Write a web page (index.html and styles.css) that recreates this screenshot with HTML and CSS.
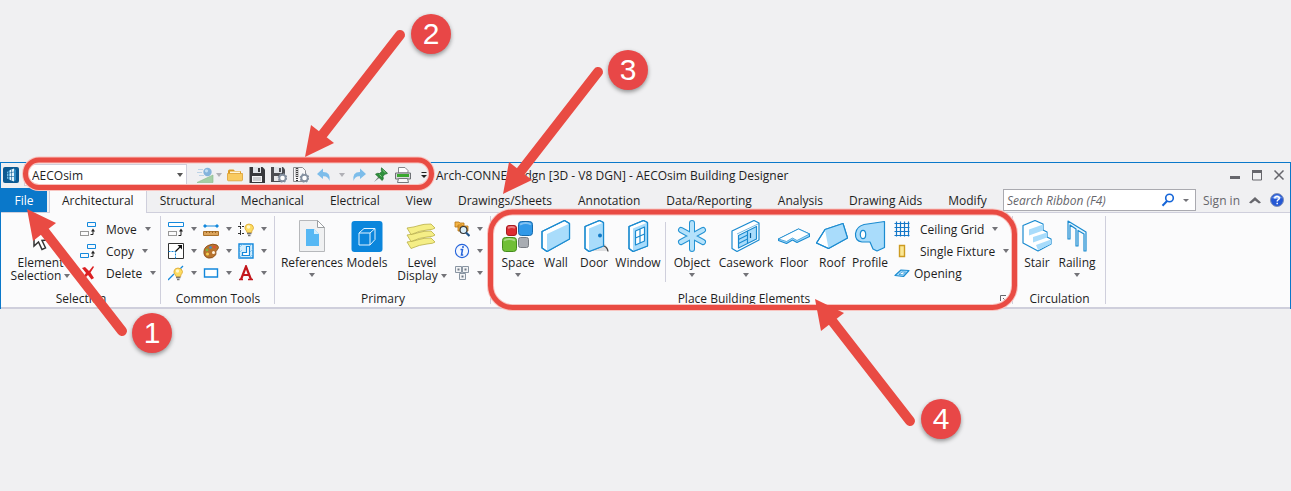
FILE: index.html
```html
<!DOCTYPE html>
<html lang="en">
<head>
  <meta charset="UTF-8" />
  <meta name="viewport" content="width=device-width, initial-scale=1" />
  <title>AECOsim Building Designer - Ribbon</title>
  <link rel="stylesheet" href="styles.css">
</head>
<body>
  <main class="app-window">
    <!-- title bar -->
    <header class="titlebar">
      <svg class="app-icon" viewBox="0 0 16 16"><rect width="16" height="16" rx="2" fill="#0c5a92"/><path d="M4 5l3-2v10l-3-1.500z" fill="#6fbce6"/><path d="M7 3l4-1.500v13L7 13z" fill="#e4f5fd"/><path d="M11 1.500l2 1.500v10l-2 1.500z" fill="#2f8cc4"/><path d="M5.500 4v9M8.500 2.500v11M4 6.500l7-1.500M4 9.500h7" stroke="#0c5a92" stroke-width=".6"/></svg>
      <div class="workflow">
        <select aria-label="Workflow"><option>AECOsim</option></select>
      </div>
      <div class="quick-access">
        <button class="qa-btn qa-wide" aria-label="View"><svg viewBox="0 0 18 16"><path d="M1 15.500L17 8v7.500z" fill="#a4cfa5" stroke="#8abb8c" stroke-width=".6"/><circle cx="11.500" cy="5" r="4.200" fill="#84b4dc"/><circle cx="10.500" cy="3.800" r="1.600" fill="#c3dff3"/><path d="M2 2.500h5M1 5.500h5M3 8.500h5" stroke="#bcd3e6" stroke-width="1.200"/></svg><i class="caret light"></i></button>
        <button class="qa-btn" aria-label="Open"><svg viewBox="0 0 16 16"><path d="M1 4q0-1.500 1.500-1.500h4l1.500 1.500h5q1 0 1 1v7H1z" fill="#dc9b24"/><path d="M3 4.500h10v4H3z" fill="#fff6d8"/><path d="M.5 6.500h15v6.500q-.1.800-1 .8H1.500q-.9 0-1-.8z" fill="#f9cb61" stroke="#dda032" stroke-width=".8"/></svg></button>
        <button class="qa-btn" aria-label="Save"><svg viewBox="0 0 16 16"><path d="M.5 0h13L16 2.500V16H.5z" fill="#38393d"/><path d="M4 0h8v6H4z" fill="#dfe3e8"/><path d="M9 1h2v4H9z" fill="#38393d"/><path d="M3 9h10v6H3z" fill="#f4f5f7"/><path d="M4 11h8M4 13h8" stroke="#a5a8ad"/></svg></button>
        <button class="qa-btn" aria-label="Save Settings"><svg viewBox="0 0 16 16"><path d="M0 0h12L14 2.500V15H0z" fill="#4b4d52"/><path d="M3 0h8v6H3z" fill="#dfe3e8"/><path d="M8 1h2v4H8z" fill="#4b4d52"/><path d="M3 9h8v5H3z" fill="#e6e8eb"/><circle cx="11.500" cy="11" r="3.200" fill="#fff" stroke="#8490a0" stroke-width="1.800"/><circle cx="11.500" cy="11" r="4.200" fill="none" stroke="#8490a0" stroke-width="1.200" stroke-dasharray="1.700 1.600"/></svg></button>
        <button class="qa-btn" aria-label="Compress"><svg viewBox="0 0 16 16"><path d="M.5.500h9l3 3v11H.5z" fill="#f7f7f8" stroke="#8b8d91"/><path d="M4 1v13" stroke="#333" stroke-width="2" stroke-dasharray="1 1"/><path d="M3 1v9M5 1v9" stroke="#666" stroke-width=".6"/><circle cx="11.500" cy="11" r="3.200" fill="#fff" stroke="#8490a0" stroke-width="1.800"/><circle cx="11.500" cy="11" r="4.200" fill="none" stroke="#8490a0" stroke-width="1.200" stroke-dasharray="1.700 1.600"/></svg></button>
        <button class="qa-btn qa-undo" aria-label="Undo"><svg viewBox="0 0 16 16"><path d="M7 1.500L1 7l6 5V9.300q5-.5 6.500 4.700 1.600-9-6.500-9.100z" fill="#7dbdea"/></svg><i class="caret light"></i></button>
        <button class="qa-btn" aria-label="Redo"><svg viewBox="0 0 16 16"><path d="M9 1.500L15 7l-6 5V9.300q-5-.5-6.500 4.700-1.600-9 6.500-9.100z" fill="#7dbdea"/></svg></button>
        <button class="qa-btn" aria-label="Pin"><svg viewBox="0 0 16 16"><path d="M1 15l5-6 1.200 1.200z" fill="#7a8580"/><path d="M8.500.800l6 5.500-1.500.7-1 .1-2 2.200q1 2.700-.8 4.200L2.500 7.300q1.800-1.500 4.200-.8l2-2-.4-1.200z" fill="#2f8f3c" stroke="#1b6a28" stroke-width=".7"/><path d="M9.500 3l3 2.800M6.500 7.500l2 2" stroke="#85cf86"/></svg></button>
        <button class="qa-btn" aria-label="Print"><svg viewBox="0 0 16 16"><path d="M3.500 6V.5h6.500l3 3V6z" fill="#fff" stroke="#85878b"/><path d="M.5 6h15v6H.5z" fill="#d8dadd" stroke="#6e7175"/><path d="M2 7h12v3H2z" fill="#3aa82f"/><path d="M3.500 11.500h9l1 4h-11z" fill="#f7f8f9" stroke="#75787c"/></svg></button>
        <button class="qa-btn" aria-label="Customize Quick Access"><svg viewBox="0 0 16 16"><path d="M4.500 5.500h5" stroke="#222"/><path d="M4 8h6l-3 3z" fill="#222"/></svg></button>
      </div>
      <h1 class="doc-title">Arch-CONNECT.dgn [3D - V8 DGN] - AECOsim Building Designer</h1>
      <div class="window-controls">
        <button aria-label="Minimize"><svg viewBox="0 0 12 12"><path d="M1 8.500h10" stroke="#66666c" stroke-width="3"/></svg></button>
        <button aria-label="Maximize"><svg viewBox="0 0 12 12"><path d="M1.500 2v9h9V2" fill="none" stroke="#66666c"/><path d="M1 2.500h10" stroke="#66666c" stroke-width="3"/></svg></button>
        <button aria-label="Close"><svg viewBox="0 0 12 12"><path d="M1.500 1.500l9 9M10.500 1.500l-9 9" stroke="#66666c" stroke-width="1.500"/></svg></button>
      </div>
    </header>

    <!-- tabs -->
    <nav class="tabbar">
      <button class="file-tab">File</button>
      <button class="tab active">Architectural</button>
      <button class="tab">Structural</button>
      <button class="tab">Mechanical</button>
      <button class="tab">Electrical</button>
      <button class="tab">View</button>
      <button class="tab">Drawings/Sheets</button>
      <button class="tab">Annotation</button>
      <button class="tab">Data/Reporting</button>
      <button class="tab">Analysis</button>
      <button class="tab">Drawing Aids</button>
      <button class="tab">Modify</button>
      <div class="tab-tools">
        <div class="search">
          <input type="search" placeholder="Search Ribbon (F4)" aria-label="Search Ribbon">
          <svg viewBox="0 0 14 14"><circle cx="8.500" cy="5" r="3.800" fill="none" stroke="#1565d8" stroke-width="1.600"/><path d="M6 8l-4.500 4.800" stroke="#1565d8" stroke-width="2"/></svg>
          <i class="caret small"></i>
        </div>
        <a class="sign-in" href="#">Sign in</a>
        <button class="tool-btn" aria-label="Collapse ribbon"><svg viewBox="0 0 14 14"><path d="M1 9.500l6-5.500 6 5.500-2 1L7 7.500l-4 3z" fill="#66666c"/></svg></button>
        <button class="tool-btn" aria-label="Help"><svg viewBox="0 0 14 14"><circle cx="7" cy="7" r="6.500" fill="#2558d4" stroke="#8091b8"/><path d="M2 5q5-6 10 0-5 2-10 0z" fill="#7ea4f2"/><path d="M4.700 5.400q.2-2 2.300-2 2.300 0 2.300 1.800 0 1.100-1.200 1.700-.9.500-.9 1.500M7.200 9.800v1.500" fill="none" stroke="#fff" stroke-width="1.500"/></svg></button>
      </div>
    </nav>

    <!-- ribbon groups -->
    <div class="ribbon">
      <section class="group g-selection">
        <div class="group-body">
          <button class="big w-xl"><svg viewBox="0 0 32 32"><path d="M9 7l0 19 4.500-4 3.500 7.500 3.500-1.700-3.500-7.300 6-.5z" fill="#fff" stroke="#333" stroke-width="1.500"/></svg><span>Element<br>Selection <i class="caret"></i></span></button>
          <div class="rows">
            <button class="row"><svg viewBox="0 0 16 16"><path d="M7.500 1.500h8v4h-8z" fill="#f4faff" stroke="#1388dc"/><path d="M.5 10.500h8v4h-8z" fill="none" stroke="#333" stroke-dasharray="1 1"/><path d="M10.500 13.500h2.500V9" fill="none" stroke="#222"/><path d="M11 10.500l2-3 2 3z" fill="#222"/></svg><span>Move</span><i class="caret"></i></button>
            <button class="row"><svg viewBox="0 0 16 16"><path d="M7.500 1.500h8v4h-8zM.5 10.500h8v4h-8z" fill="#f4faff" stroke="#1388dc"/><path d="M10.500 13.500h2.500V9" fill="none" stroke="#222"/><path d="M11 10.500l2-3 2 3z" fill="#222"/></svg><span>Copy</span><i class="caret"></i></button>
            <button class="row"><svg viewBox="0 0 16 16"><path d="M2 3l3-1 4 4 4-5 1 1-3.500 5.500L14 13l-2.500 1.500L8 10l-4 4-1.500-1L6 8z" fill="#dc2023"/></svg><span>Delete</span><i class="caret"></i></button>
          </div>
        </div>
        <h2>Selection</h2>
      </section>

      <section class="group g-common">
        <div class="group-body tool-grid">
          <button class="tool" aria-label="Move tool"><svg viewBox="0 0 16 16"><path d="M.5 1.500h15v4H.5z" fill="#fff" stroke="#1388dc"/><path d="M.5 10.500h8v4h-8z" fill="none" stroke="#333" stroke-dasharray="1 1"/><path d="M10.500 14.500h2.500V9" fill="none" stroke="#222"/><path d="M11 10.500l2-3 2 3z" fill="#222"/></svg><i class="caret"></i></button>
          <button class="tool" aria-label="Measure"><svg viewBox="0 0 16 16"><path d="M1 5h14" stroke="#1388dc"/><path d="M0 5l2-2 2 2-2 2zM12 5l2-2 2 2-2 2z" fill="#1388dc"/><path d="M.5 10.500h15v4H.5z" fill="#dba45c" stroke="#a9712c"/><path d="M3.500 10v2M6.500 10v2M9.500 10v2M12.500 10v2" stroke="#9a6421"/></svg><i class="caret"></i></button>
          <button class="tool" aria-label="Light grid"><svg viewBox="0 0 16 16"><path d="M2.500 1v13M0 5.500h6M0 12.500h6" stroke="#333" fill="none" stroke-dasharray="3 1"/><path d="M8.500 10Q6.500 8 7 6q.8-3 4-3 4 .2 4.500 3.500 0 1.800-1.700 3.500v1.500H9z" fill="#fcdc62" stroke="#dca42a" stroke-width=".8"/><circle cx="10.500" cy="6" r="1.700" fill="#fff7cd"/><path d="M9 12.500h4.500M10 14.500h2.500" stroke="#777" stroke-width="1.300"/></svg><i class="caret"></i></button>
          <button class="tool" aria-label="Scale"><svg viewBox="0 0 16 16"><path d="M.5.500h15v15H.5z" fill="#fff" stroke="#333"/><path d="M.5 8.500h7v7" fill="none" stroke="#1388dc" stroke-dasharray="2 1"/><path d="M7.500 8.500l5-5" stroke="#111" stroke-width="1.200"/><path d="M9.500 2h4.500v4.500z" fill="#111"/></svg><i class="caret"></i></button>
          <button class="tool" aria-label="Palette"><svg viewBox="0 0 16 16"><path d="M1 11Q0 5 5 2.500t9-.5q3 2.500.5 4.500T13 11.500Q10 16 5 15 1.500 14 1 11z" fill="#b8742f" stroke="#874913" stroke-width=".8"/><circle cx="10.500" cy="9.500" r="1.500" fill="#fff3df"/><circle cx="4" cy="7" r="1.300" fill="#75b842"/><circle cx="7.500" cy="4.500" r="1.300" fill="#438ed2"/><circle cx="11.500" cy="4" r="1.300" fill="#e54a35"/><circle cx="4.500" cy="11" r="1.500" fill="#f3ce4b"/></svg><i class="caret"></i></button>
          <button class="tool" aria-label="Hatch"><svg viewBox="0 0 16 16"><path d="M1 1h14v14H1z" fill="#d3edfc" stroke="#1388dc" stroke-width="1.400"/><path d="M1 5l4-4M1 10l3-3M1 15l3-3M11 4l3-3M12 9l3-3M12 14l3-3" stroke="#6bb9ec" stroke-width=".7"/><path d="M8.500 3.500h3v9h-7v-3h4z" fill="#fff" stroke="#1388dc" stroke-width="1.200"/></svg><i class="caret"></i></button>
          <button class="tool" aria-label="Light line"><svg viewBox="0 0 16 16"><path d="M0 15l6-6M12 4l3-3" stroke="#1388dc" stroke-width="1.300"/><path d="M7.500 10Q5.500 8 6 6q.8-3 4-3 4 .2 4.500 3.500 0 1.800-1.700 3.500v1.500H8z" fill="#fcdc62" stroke="#dca42a" stroke-width=".8"/><circle cx="9.500" cy="6" r="1.700" fill="#fff7cd"/><path d="M8 12.500h4.500M9 14.500h2.500" stroke="#777" stroke-width="1.300"/></svg><i class="caret"></i></button>
          <button class="tool" aria-label="Place block"><svg viewBox="0 0 16 16"><path d="M1.500 4h13v8h-13z" fill="#fff" stroke="#1388dc" stroke-width="1.400"/></svg><i class="caret"></i></button>
          <button class="tool" aria-label="Text"><svg viewBox="0 0 16 16"><path d="M3 14.500L8 1.500l5 13M4.500 10h7" fill="none" stroke="#c3171c" stroke-width="2.200"/><path d="M1 14.500h4M10 14.500h5" stroke="#c3171c" stroke-width="1.500"/></svg><i class="caret"></i></button>
        </div>
        <h2>Common Tools</h2>
      </section>

      <section class="group g-primary">
        <div class="group-body">
          <button class="big w-l"><svg viewBox="0 0 32 32"><path d="M3.500.500h18l7 7v24h-25z" fill="#f0f1f2" stroke="#b6b8bb"/><path d="M10 9h8l5 5v12H10z" fill="#56b8f4"/><path d="M18 9v5h5z" fill="#d5effd"/><path d="M21.500.500v7h7z" fill="#fff" stroke="#9da0a3"/></svg><span>References</span><i class="caret"></i></button>
          <button class="big w-m"><svg viewBox="0 0 32 32"><rect x=".5" y="1" width="31" height="31" rx="3" fill="#0b86dc"/><path d="M8 13h11v12H8zM8 13l5-4.500h11L19 13M24 8.500v11L19 25" fill="none" stroke="#e4f4ff"/></svg><span>Models</span></button>
          <button class="big w-l"><svg viewBox="0 0 32 32"><g fill="#f5ee86" stroke="#b9ae45" stroke-width=".8"><path d="M1 22q8-1 12-2.500T25 18l4 4q-1 1.500-8 2t-16 4.500z"/><path d="M1 15q8-1 12-2.500T25 11l4 4q-1 1.500-8 2t-16 4.500z"/><path d="M1 8q8-1 12-2.500T25 4l4 4q-1 1.500-8 2t-16 4.500z"/></g></svg><span>Level<br>Display <i class="caret"></i></span></button>
          <div class="rows icons">
            <button class="row" aria-label="Explore"><svg viewBox="0 0 16 16"><path d="M1 1h4l1 1h4v4H1zM4 4h4l1 1h5v5H4z" fill="#f4b446" stroke="#b87513" stroke-width=".8"/><circle cx="9.500" cy="9" r="3.500" fill="#d9eefa" stroke="#333" stroke-width="1.200"/><path d="M12 11.500l3.500 3.500" stroke="#205489" stroke-width="2.200"/></svg><i class="caret"></i></button>
            <button class="row" aria-label="Properties"><svg viewBox="0 0 16 16"><circle cx="8" cy="8" r="6.600" fill="#f4f8ff" stroke="#2463db" stroke-width="1.100"/><path d="M6.500 6.500h2L7.500 12h1.700" fill="none" stroke="#2463db" stroke-width="1.500"/><circle cx="9" cy="4" r="1" fill="#2463db"/></svg><i class="caret"></i></button>
            <button class="row" aria-label="Keyin"><svg viewBox="0 0 16 16"><path d="M1.500 1.500h6v6h-6zM8.500 1.500h6v6h-6zM5.500 8.500h6v6h-6z" fill="#f3f4f6" stroke="#8995a2"/><path d="M3.500 4.500h2M10.500 4.500h2M7.500 11.500h2" stroke="#6f7985" stroke-width="2"/></svg><i class="caret"></i></button>
          </div>
        </div>
        <h2>Primary</h2>
      </section>

      <section class="group g-place">
        <div class="group-body">
          <button class="big w-s"><svg viewBox="0 0 32 32"><rect x="4.500" y="5.500" width="10" height="10" rx="2.500" fill="#dd2a30" stroke="#a61b20"/><rect x="16.500" y="1.500" width="14" height="14" rx="3" fill="#3199e8" stroke="#166bad"/><rect x=".5" y="17.500" width="14" height="14" rx="3" fill="#70bf36" stroke="#458c1c"/><rect x="16.500" y="17.500" width="10" height="10" rx="2" fill="#a8acb2" stroke="#787c82"/><path d="M18 4.500q6-3 11 0M2 20.500q5-3 11 0M6 8q4-2 7 0" stroke="#fff" stroke-opacity=".4" stroke-width="2" fill="none"/></svg><span>Space</span><i class="caret"></i></button>
          <button class="big w-s"><svg viewBox="0 0 32 32" class="line"><path d="M2 11.500L24.500.500l5 3V19L7 31.500 2 28z" fill="#fff"/><path d="M7 14L29.500 3.500V19L7 31.500z" fill="#a9dcfb" stroke="none"/><path d="M2 11.500L24.500.500l5 3V19L7 31.500 2 28z" fill="none"/></svg><span>Wall</span></button>
          <button class="big w-s"><svg viewBox="0 0 32 32"><path d="M11 31l16-7q3 3 3 7z" fill="#dedfe1"/><g class="line"><path d="M7 6.500L21.500.500l4 2V26L11 31.500l-4-3z" fill="#fff"/><path d="M11 8.500l14.500-6V26L11 31.500z" fill="#a9dcfb" stroke="none"/><path d="M7 6.500L21.500.500l4 2V26L11 31.500l-4-3z" fill="none"/></g><circle cx="22" cy="15.500" r="2" fill="#1078c6"/><path d="M26 26q3.500 1.500 4 5.500" fill="none" stroke="#444" stroke-width="1.300"/></svg><span>Door</span></button>
          <button class="big w-m"><svg viewBox="0 0 32 32" class="line"><path d="M7 6.500L21.500.500l4 2V26L11 31.500l-4-3z" fill="#fff"/><path d="M11 8.500l14.500-6V26L11 31.500z" fill="#a9dcfb" stroke="none"/><path d="M7 6.500L21.500.500l4 2V26L11 31.500l-4-3z" fill="none"/><path d="M13.500 11l9-4v14l-9 4zM18 9v14M13.500 18l9-4" fill="#fff"/></svg><span>Window</span></button>
          <div class="divider"></div>
          <button class="big w-m"><svg viewBox="0 0 32 32"><path d="M16 3v26M5 10l22 12M27 10L5 22" stroke="#2493d4" stroke-width="6" stroke-linecap="round"/><path d="M16 3v26M5 10l22 12M27 10L5 22" stroke="#b5e2fb" stroke-width="4" stroke-linecap="round"/></svg><span>Object</span><i class="caret"></i></button>
          <button class="big w-l"><svg viewBox="0 0 32 32" class="line"><path d="M2 11L24 .500l5 2.500v17L7 31.500l-5-3z" fill="#fff"/><path d="M7 14L29 3.500" fill="none" stroke-width=".6"/><path d="M8.500 15.500l9-4.500v12.500l-9 4.500zM17.500 11l9-4.500V19l-9 4.500z" fill="#a9dcfb"/><path d="M8.500 19.500l9-4.500M8.500 23.500l9-4.500" fill="none"/><path d="M20.500 13v5" stroke="#075b96"/></svg><span>Casework</span><i class="caret"></i></button>
          <button class="big w-s"><svg viewBox="0 0 32 32" class="line"><path d="M.5 19L20.500 9l11 5v2.500L19 22.500l-4.500-2.500-6 3.500-8-3z" fill="#a9dcfb"/><path d="M.5 19L20.500 9l11 5L19 20.500 14.500 18l-6 3.500z" fill="#fff" stroke-width=".7"/></svg><span>Floor</span></button>
          <button class="big w-s"><svg viewBox="0 0 32 32" class="line"><path d="M.5 23L9 9.500l18-6 4.500 14.500-19 10.500z" fill="#fff"/><path d="M9 9.500l18-6 4.500 14.500-19 10.500z" fill="#a9dcfb" stroke="none"/><path d="M.5 23L9 9.500l18-6 4.500 14.500-19 10.500z" fill="none"/></svg><span>Roof</span></button>
          <button class="big w-s"><svg viewBox="0 0 32 32" class="line"><path d="M10 4.500L30.500 1.500v26l-7.500 3.500-4-2-3-7H8Q1 21 1.500 13.500 2.500 6.500 10 4.500z" fill="#a9dcfb"/><ellipse cx="9" cy="14.500" rx="2.700" ry="4.200" fill="#fff"/></svg><span>Profile</span></button>
          <div class="rows elements">
            <button class="row"><svg viewBox="0 0 16 16"><path d="M2.500.500v15M6.500.500v15M10.500.500v15M14.500.500v15M.5 2.500h15M.5 6.500h15M.5 10.500h15M.5 14.500h15" stroke="#1477c8" stroke-width="1.200"/></svg><span>Ceiling Grid</span><i class="caret"></i></button>
            <button class="row"><svg viewBox="0 0 16 16"><path d="M5.500 2.500h5v11h-5z" fill="#fbe794" stroke="#cd9b22" stroke-width="1.400"/></svg><span>Single Fixture</span><i class="caret"></i></button>
            <button class="row tight"><svg viewBox="0 0 16 16" class="line"><path d="M1 10.500L7 5l8 .5-5.500 6z" fill="#a9dcfb"/><path d="M5 9.500l3-2.500 3.500.2-3 2.500z" fill="#fff" stroke-width=".7"/></svg><span>Opening</span></button>
          </div>
        </div>
        <h2>Place Building Elements</h2>
        <button class="launcher" aria-label="Place Building Elements options"><svg viewBox="0 0 8 8"><path d="M.5 6V.500H6M3 3l4 4M7 3.500V7H3.500" fill="none" stroke="#66666c"/></svg></button>
      </section>

      <section class="group g-circulation">
        <div class="group-body">
          <button class="big w-s"><svg viewBox="0 0 32 32" class="line"><path d="M2 5.500L14 .500l8 3.500v6l4 2v5l4 2v5L17 31 2 23z" fill="#fff"/><path d="M8 9.500l14-5v6l-14 5zM12 17l14-4.500v5l-14 5zM15 25l15-5.500v4.500l-13 6z" fill="#a9dcfb" stroke="none"/></svg><span>Stair</span></button>
          <button class="big w-s"><svg viewBox="0 0 32 32" class="line"><path d="M7 19V1l18 11v19h-2V14l-6-3.500V26h-2V9L9 5v14z" fill="#e9f6fe"/></svg><span>Railing</span><i class="caret"></i></button>
        </div>
        <h2>Circulation</h2>
      </section>
    </div>
  </main>

  <!-- numbered callouts drawn over the ribbon -->
  <svg class="callouts" width="1291" height="491" viewBox="0 0 1291 491">
    <defs>
      <g id="arrow"><path d="M95 122L18 23" stroke="#e94b43" stroke-width="10" stroke-linecap="round"/><path d="M0 0l29 14L6 32z" fill="#e94b43"/></g>
    </defs>
    <g fill="none" stroke="#f8c4c0" stroke-width="7"><rect x="25.500" y="160" width="406" height="27.500" rx="13.500"/><rect x="490.500" y="212" width="524" height="95.500" rx="22"/></g>
    <g fill="none" stroke="#e94b43" stroke-width="5"><rect x="25.500" y="160" width="406" height="27.500" rx="13.500"/><rect x="490.500" y="212" width="524" height="95.500" rx="22"/></g>
    <use href="#arrow" transform="translate(27 209)"/>
    <use href="#arrow" transform="translate(305 157) scale(1 -1)"/>
    <use href="#arrow" transform="translate(503 194) scale(1 -1)"/>
    <use href="#arrow" transform="translate(815 299)"/>
    <g class="badges">
      <circle cx="152" cy="333" r="20"/><circle cx="431" cy="34" r="20"/><circle cx="628" cy="70" r="20"/><circle cx="941" cy="419" r="20"/>
    </g>
    <g class="numbers"><text x="152" y="343">1</text><text x="431" y="44">2</text><text x="628" y="80">3</text><text x="941" y="429">4</text></g>
  </svg>
</body>
</html>
```
FILE: styles.css
```css
:root {
  --font-ui: 'Open Sans', 'Noto Sans', sans-serif;
  --color-bg: #f0f0f2;
  --color-panel: #fbfbfc;
  --color-blue: #0a78ca;
  --color-line: #cfcfdc;
  --color-text: #1e1e1e;
  --color-muted: #66666c;
}

* {
  box-sizing: border-box;
}

body {
  margin: 0;
  padding-top: 162px;
  position: relative;
  min-height: 100vh;
  background: var(--color-bg);
  color: var(--color-text);
  font-family: var(--font-ui);
  font-size: 12px;
}

button, input, select {
  font: inherit;
  color: inherit;
}

button {
  flex: none;
  padding: 0;
  border: 0;
  background: none;
  white-space: nowrap;
}

svg {
  flex: none;
}

.app-window {
  border: 1px solid var(--color-blue);
  border-bottom: 0;
}

.caret {
  display: inline-block;
  flex: none;
  border: 3px solid transparent;
  border-top: 4px solid #737378;
  border-bottom: 0;
}
.caret.light {
  border-top-color: #b0b0b6;
}
.caret.small {
  border-top-width: 3px;
}

/* title bar */
.titlebar {
  display: flex;
  align-items: center;
  height: 24px;
}
.app-icon {
  width: 16px;
  height: 16px;
  margin: 0 5px 0 2px;
}
.workflow {
  position: relative;
  width: 163px;
}
.workflow select {
  appearance: none;
  display: block;
  width: 100%;
  height: 22px;
  padding: 0 7px;
  border: 1px solid var(--color-line);
  border-radius: 0;
  background: #fff;
}
.workflow::after {
  content: "";
  position: absolute;
  right: 4px;
  top: 9px;
  border: 3px solid transparent;
  border-top: 4px solid #555;
  border-bottom: 0;
}
.quick-access {
  display: flex;
  margin-left: 6px;
}
.qa-btn {
  display: flex;
  align-items: center;
  justify-content: center;
  width: 22px;
  height: 22px;
}
.qa-btn svg {
  width: 16px;
  height: 16px;
}
.qa-wide {
  width: 31px;
  gap: 2px;
}
.qa-wide svg {
  width: 18px;
}
.qa-undo {
  width: 36px;
  gap: 7px;
}
.doc-title {
  flex: 1;
  margin: 0;
  font-size: 12px;
  font-weight: 400;
  white-space: nowrap;
}
.window-controls {
  display: flex;
  gap: 10px;
  margin-right: 5px;
}
.window-controls button,
.window-controls svg {
  display: block;
  width: 12px;
  height: 12px;
}

/* tabs */
.tabbar {
  display: flex;
  align-items: stretch;
  height: 26px;
  padding-top: 1px;
  border-bottom: 1px solid var(--color-line);
}
.file-tab {
  width: 46px;
  margin-right: 2px;
  background: var(--color-blue);
  color: #fff;
}
.tab {
  padding: 0 13px;
}
.tab.active {
  margin-bottom: -1px;
  padding: 0 12px;
  background: var(--color-panel);
  border: 1px solid var(--color-line);
  border-width: 0 1px;
}
.tab-tools {
  display: flex;
  align-items: center;
  margin-left: auto;
  padding-right: 4px;
  color: var(--color-muted);
}
.search {
  display: flex;
  align-items: center;
  width: 193px;
  height: 22px;
  padding: 0 6px 0 3px;
  border: 1px solid #aaaab0;
  background: #fff;
}
.search input {
  flex: 1;
  min-width: 0;
  padding: 0;
  border: 0;
  outline: 0;
  background: none;
  font-style: italic;
}
.search input::placeholder {
  color: var(--color-muted);
}
.search svg {
  width: 14px;
  height: 14px;
  margin-right: 8px;
}
.sign-in {
  margin: 0 8px 0 7px;
  color: inherit;
  text-decoration: none;
  white-space: nowrap;
}
.tool-btn {
  width: 16px;
  height: 16px;
}
.tool-btn svg {
  display: block;
  width: 14px;
  height: 14px;
}
.tool-btn + .tool-btn {
  margin-left: 6px;
}

/* ribbon */
.ribbon {
  display: flex;
  height: 96px;
  background: var(--color-panel);
  border-bottom: 2px solid var(--color-line);
}
.group {
  position: relative;
  display: flex;
  flex: none;
  flex-direction: column;
  padding-top: 5px;
}
.group::after {
  content: "";
  position: absolute;
  right: 0;
  top: 3px;
  bottom: 3px;
  width: 1px;
  background: var(--color-line);
}
.group h2 {
  margin: auto 0 0;
  font-size: 12px;
  font-weight: 400;
  line-height: 16px;
  text-align: center;
}
.group-body {
  display: flex;
}
.g-selection { width: 160px; }
.g-common { width: 114px; }
.g-primary { width: 216px; }
.g-place { width: 522px; }
.g-circulation { width: 93px; }

.g-primary .group-body,
.g-place .group-body {
  padding-left: 8px;
}
.g-primary .group-body {
  gap: 1px;
}
.g-circulation .group-body {
  gap: 2px;
  padding-left: 5px;
}
/* leave room for the launcher */
.g-place h2 {
  padding-right: 16px;
}

.big {
  display: flex;
  flex-direction: column;
  align-items: center;
  padding-top: 2px;
  line-height: 13px;
}
.big svg {
  width: 32px;
  height: 32px;
  margin-bottom: 4px;
}
.big > .caret {
  margin-top: 4px;
}
.big span .caret {
  vertical-align: 2px;
}
.w-s { width: 38px; }
.w-m { width: 50px; }
.w-l { width: 58px; }
.w-xl { width: 79px; }

.line {
  stroke: #1b8bd0;
  stroke-width: 1.2px;
  stroke-linejoin: round;
}

.divider {
  width: 1px;
  height: 60px;
  margin: 4px 1px 0 2px;
  background: var(--color-line);
}

.row {
  display: flex;
  align-items: center;
  gap: 8px;
  height: 22px;
}
.row svg,
.tool svg {
  width: 16px;
  height: 16px;
}
.row svg {
  margin-right: 2px;
}
.row.tight {
  gap: 2px;
}
.icons {
  margin-left: 2px;
}
.icons .row {
  gap: 5px;
}
.elements {
  margin-left: 5px;
}

.tool-grid {
  display: grid;
  grid-template-columns: repeat(3, 35px);
  grid-auto-rows: 22px;
  padding-left: 7px;
}
.tool {
  display: flex;
  align-items: center;
  gap: 7px;
}

.launcher {
  position: absolute;
  right: 5px;
  bottom: 4px;
}
.launcher svg {
  display: block;
  width: 8px;
  height: 8px;
}

/* callouts */
.callouts {
  position: absolute;
  left: 0;
  top: 0;
  pointer-events: none;
}
.badges {
  fill: #e84747;
  filter: drop-shadow(0 2px 2px rgb(0 0 0 / 0.4));
}
.numbers {
  fill: #fff;
  font-family: 'Liberation Sans', sans-serif;
  font-size: 30px;
  text-anchor: middle;
}
```
